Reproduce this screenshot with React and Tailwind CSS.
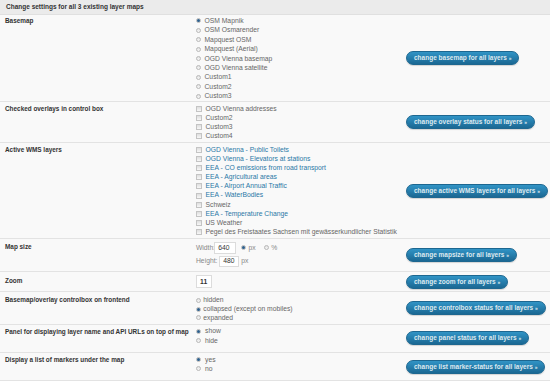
import React from 'react'

const blue = 'text-[#2a78a6]'

function Radio({ checked }) {
  return (
    <span className="relative flex h-[5px] w-[5px] shrink-0 items-center justify-center rounded-full border border-[#b8b8b8] bg-gradient-to-b from-[#e2e2e2] to-[#f7f7f7]">
      {checked && <span className="h-[3px] w-[3px] rounded-full bg-[#2c5f8c]"></span>}
    </span>
  )
}

function Check() {
  return (
    <span className="h-[6px] w-[6px] shrink-0 border border-[#c4c4c4] bg-gradient-to-b from-[#dedede] to-[#f7f7f7]"></span>
  )
}

function Option({ checked, text, h = 'h-[9.4px]', gap = 'gap-[3.5px]' }) {
  return (
    <div className={`flex items-center ${h} ${gap}`}>
      <Radio checked={checked} />
      <span className="text-[#666] whitespace-nowrap">{text}</span>
    </div>
  )
}

function Box({ text, link, h = 'h-[9.2px]' }) {
  return (
    <div className={`flex items-center ${h} gap-[3.5px]`}>
      <Check />
      <span className={`${link ? blue : 'text-[#666]'} whitespace-nowrap`}>{text}</span>
    </div>
  )
}

function ActionButton({ children }) {
  return (
    <button className="h-[14px] rounded-full border border-[#1d6790] bg-gradient-to-b from-[#3194c6] to-[#1b6893] px-[7px] text-[6.5px] font-bold leading-[12px] text-[#dde9f0] whitespace-nowrap shadow-[0_1px_1px_rgba(0,0,0,0.15)]">
      {children} <span className="text-[5px]">»</span>
    </button>
  )
}

function Row({ label, pad, lineH = 'leading-[9.4px]', button, children }) {
  return (
    <div className="flex border-b border-[#e3e3e3]">
      <div className={`flex w-[406px] ${pad}`}>
        <div className={`w-[196px] shrink-0 pl-[5px] font-bold text-[6.4px] text-[#333] ${lineH}`}>{label}</div>
        <div className="flex flex-col">{children}</div>
      </div>
      <div className="flex flex-1 items-center">
        <ActionButton>{button}</ActionButton>
      </div>
    </div>
  )
}

export default function App() {
  return (
    <div className="w-[550px] h-[381px] overflow-hidden bg-[#f9f9f9] font-['Liberation_Sans',Arial,sans-serif] text-[6.75px]">
      <div className="flex h-[15px] items-center border-b border-[#e0e0e0] bg-[#ebebeb] pl-[6px] text-[6.5px] font-bold text-[#333]">
        Change settings for all 3 existing layer maps
      </div>

      <Row label="Basemap" pad="pt-[1.3px] pb-[0.6px]" button="change basemap for all layers">
        <Option checked text="OSM Mapnik" />
        <Option text="OSM Osmarender" />
        <Option text="Mapquest OSM" />
        <Option text="Mapquest (Aerial)" />
        <Option text="OGD Vienna basemap" />
        <Option text="OGD Vienna satellite" />
        <Option text="Custom1" />
        <Option text="Custom2" />
        <Option text="Custom3" />
      </Row>

      <Row label="Checked overlays in control box" pad="pt-[1.7px] pb-[1.4px]" lineH="leading-[9.2px]" button="change overlay status for all layers">
        <Box text="OGD Vienna addresses" />
        <Box text="Custom2" />
        <Box text="Custom3" />
        <Box text="Custom4" />
      </Row>

      <Row label="Active WMS layers" pad="pt-[2px] pb-[1.4px]" lineH="leading-[9.15px]" button="change active WMS layers for all layers">
        <Box link h="h-[9.15px]" text="OGD Vienna - Public Toilets" />
        <Box link h="h-[9.15px]" text="OGD Vienna - Elevators at stations" />
        <Box link h="h-[9.15px]" text="EEA - CO emissions from road transport" />
        <Box link h="h-[9.15px]" text="EEA - Agricultural areas" />
        <Box link h="h-[9.15px]" text="EEA - Airport Annual Traffic" />
        <Box link h="h-[9.15px]" text="EEA - WaterBodies" />
        <Box h="h-[9.15px]" text="Schweiz" />
        <Box link h="h-[9.15px]" text="EEA - Temperature Change" />
        <Box h="h-[9.15px]" text="US Weather" />
        <Box h="h-[9.15px]" text="Pegel des Freistaates Sachsen mit gewässerkundlicher Statistik" />
      </Row>

      <Row label="Map size" pad="pt-[3px] pb-[4.4px]" lineH="leading-[10px]" button="change mapsize for all layers">
        <div className="flex h-[11.7px] items-center text-[#888]">
          <span className="w-[18.3px]">Width:</span>
          <span className="flex h-[11.7px] w-[22px] items-center border border-[#dcdcdc] bg-white pl-[3px] text-[#333]">640</span>
          <span className="ml-[4.7px]"><Radio checked /></span>
          <span className="ml-[2.5px]">px</span>
          <span className="ml-[8px]"><Radio /></span>
          <span className="ml-[2.5px]">%</span>
        </div>
        <div className="mt-[2px] flex h-[11.3px] items-center text-[#888]">
          <span className="w-[23.3px]">Height:</span>
          <span className="flex h-[11.3px] w-[20px] items-center border border-[#dcdcdc] bg-white pl-[3px] text-[#333]">480</span>
          <span className="ml-[2px]">px</span>
        </div>
      </Row>

      <Row label="Zoom" pad="pt-[3px] pb-[3px]" lineH="leading-[12.6px]" button="change zoom for all layers">
        <span className="flex h-[12.6px] w-[16.3px] items-center border border-[#dcdcdc] bg-white pl-[3px] font-bold text-[#333]">11</span>
      </Row>

      <Row label="Basemap/overlay controlbox on frontend" pad="pt-[4px] pb-[1.3px]" lineH="leading-[8.8px]" button="change controlbox status for all layers">
        <Option h="h-[8.8px]" gap="gap-[2.3px]" text="hidden" />
        <Option h="h-[8.8px]" gap="gap-[2.3px]" checked text="collapsed (except on mobiles)" />
        <Option h="h-[8.8px]" gap="gap-[2.3px]" text="expanded" />
      </Row>

      <Row label="Panel for displaying layer name and API URLs on top of map" pad="pt-[2px] pb-[6.7px]" lineH="leading-[9.3px]" button="change panel status for all layers">
        <Option h="h-[9.3px]" gap="gap-[4px]" checked text="show" />
        <Option h="h-[9.3px]" gap="gap-[4px]" text="hide" />
      </Row>

      <Row label="Display a list of markers under the map" pad="pt-[2px] pb-[6.7px]" lineH="leading-[9.3px]" button="change list marker-status for all layers">
        <Option h="h-[9.3px]" gap="gap-[4px]" checked text="yes" />
        <Option h="h-[9.3px]" gap="gap-[4px]" text="no" />
      </Row>
    </div>
  )
}
